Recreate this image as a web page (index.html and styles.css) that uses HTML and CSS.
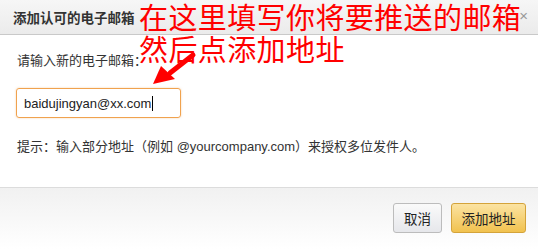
FILE: index.html
```html
<!DOCTYPE html>
<html>
<head>
<meta charset="utf-8">
<link rel="stylesheet" href="styles.css">
</head>
<body>
<div class="dialog">
  <div class="header">
    <span class="title">添加认可的电子邮箱</span>
    <span class="close">×</span>
  </div>
  <div class="body">
    <div class="label">请输入新的电子邮箱<span class="cjk">：</span></div>
    <div class="input"><span>baidujingyan@xx.com</span><span class="caret"></span></div>
    <div class="hint">提示：输入部分地址（例如 <span class="latin">@yourcompany.com</span>）来授权多位发件人。</div>
  </div>
  <div class="footer">
    <button class="btn cancel">取消</button>
    <button class="btn primary">添加地址</button>
  </div>
  <div class="annotation">在这里填写你将要推送的邮箱<br>然后点添加地址</div>
  <svg class="arrow" width="60" height="50" viewBox="0 0 60 50">
    <line x1="43" y1="14" x2="20" y2="32" stroke="#ff0000" stroke-width="5" stroke-linecap="round"/>
    <polygon points="3,43 11,25 25,38" fill="#ff0000"/>
  </svg>
</div>
</body>
</html>
```
FILE: styles.css
```css
* { box-sizing: border-box; }
html, body { margin: 0; padding: 0; }
body {
  width: 538px;
  height: 249px;
  overflow: hidden;
  background: #fff;
  font-family: "Liberation Sans", "Noto Sans CJK SC", sans-serif;
  color: #222;
}
.dialog {
  position: relative;
  width: 538px;
  height: 249px;
  display: flex;
  flex-direction: column;
}
.header {
  height: 35px;
  display: flex;
  align-items: center;
  justify-content: space-between;
  padding: 0 10px 0 13px;
  background: linear-gradient(#f6f6f6, #ebebeb);
  border-bottom: 1px solid #c9c9c9;
}
.title {
  font-family: "Noto Sans CJK SC", sans-serif;
  font-size: 13.5px;
  font-weight: bold;
  color: #333;
}
.close {
  font-size: 15px;
  color: #999;
  margin-top: -4px;
}
.body {
  height: 152px;
  padding: 16px 16px 0 16px;
  font-family: "Liberation Sans", "Noto Sans CJK SC", sans-serif;
  font-size: 13px;
  color: #333;
}
.cjk { font-family: "Noto Sans CJK SC", sans-serif; }
.label {
  line-height: 18px;
  padding-left: 1px;
}
.input {
  margin-top: 18px;
  width: 165px;
  height: 30px;
  border: 1px solid #f0a24e;
  border-radius: 3px;
  box-shadow: 0 0 2px rgba(240, 162, 78, 0.5);
  padding-left: 7px;
  display: flex;
  align-items: center;
  font-size: 13px;
  color: #222;
}
.caret {
  display: inline-block;
  width: 1px;
  height: 15px;
  background: #000;
  margin-left: 1px;
}
.hint {
  margin-top: 20px;
  line-height: 18px;
  padding-left: 1px;
}
.latin { color: #333; }
.footer {
  flex: 1;
  border-top: 1px solid #dcdcdc;
  background: linear-gradient(#f1f1f1, #ffffff);
  display: flex;
  justify-content: flex-end;
  align-items: flex-start;
  padding: 15px 12px 0 0;
  gap: 9px;
}
.btn {
  height: 30px;
  border-radius: 3px;
  font-family: "Noto Sans CJK SC", sans-serif;
  font-size: 13.5px;
  color: #222;
  padding: 0;
  cursor: pointer;
}
.cancel {
  width: 49px;
  border: 1px solid #bcbcbc;
  background: linear-gradient(#fafafa, #e6e7eb);
}
.primary {
  width: 75px;
  border: 1px solid #d4a33a;
  background: linear-gradient(#fbe3a2, #f1c24f);
}
.annotation {
  position: absolute;
  left: 139px;
  top: 0;
  font-family: "Noto Sans CJK SC", sans-serif;
  font-size: 29px;
  letter-spacing: 0.4px;
  line-height: 32px;
  color: #ff0000;
  white-space: nowrap;
}
.arrow {
  position: absolute;
  left: 150px;
  top: 41px;
}
```
